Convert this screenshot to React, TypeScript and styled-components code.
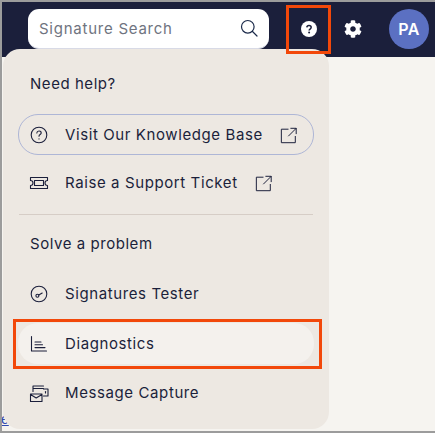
import React from "react";
import styled, { createGlobalStyle } from "styled-components";

const Global = createGlobalStyle`
  html, body { margin: 0; padding: 0; width: 435px; height: 433px; overflow: hidden; background: #f6f4f0; }
  body { font-family: Inter, "Noto Sans", sans-serif; color: #1b1f3b; }
`;

const Frame = styled.div`
  position: relative;
  box-sizing: border-box;
  width: 435px;
  height: 433px;
  overflow: hidden;
  background: #f6f4f0;
  border-top: 2px solid #9c9c9c;
  border-left: 2px solid #9c9c9c;
  border-bottom: 2px solid #9c9c9c;
`;

const Header = styled.header`
  box-sizing: border-box;
  height: 55px;
  background: #1b1f3b;
  display: flex;
  align-items: flex-start;
  padding: 7px 0 0 26px;
`;

const SearchBox = styled.div`
  box-sizing: border-box;
  flex: none;
  width: 241px;
  height: 40px;
  background: #fff;
  border-radius: 11px;
  border-bottom: 1px solid #d8dae6;
  display: flex;
  align-items: center;
  justify-content: space-between;
  padding: 0 11px 1px 11px;
  font-size: 15px;
  letter-spacing: 0.75px;
  color: #6f7480;
`;

const HeaderIcon = styled.div<{ $ml: number }>`
  flex: none;
  width: 18px;
  height: 18px;
  margin: 11px 0 0 ${(p) => p.$ml}px;
  color: #fff;
  display: flex;
`;

const Avatar = styled.div`
  flex: none;
  width: 40px;
  height: 40px;
  margin-left: 27px;
  border-radius: 50%;
  background: #5b70c2;
  color: #fff;
  font-size: 16px;
  font-weight: 600;
  letter-spacing: 0.3px;
  display: flex;
  align-items: center;
  justify-content: center;
`;

const PageLink = styled.a`
  position: absolute;
  left: -1px;
  top: 409px;
  font-family: "Liberation Sans", sans-serif;
  font-size: 14px;
  line-height: 16px;
  color: #2f49b0;
  text-decoration: underline;
`;

const Menu = styled.nav`
  position: absolute;
  left: 1px;
  top: 47px;
  box-sizing: border-box;
  width: 326px;
  height: 380px;
  background: #ede8e2;
  border-radius: 17px;
  padding: 23px 15px 0 15px;
`;

const SectionTitle = styled.div<{ $mb: number }>`
  font-size: 15px;
  line-height: 24px;
  letter-spacing: 0.55px;
  padding-left: 12px;
  margin-bottom: ${(p) => p.$mb}px;
`;

const Item = styled.a<{ $outlined?: boolean; $active?: boolean; $mt?: number }>`
  box-sizing: border-box;
  display: flex;
  align-items: center;
  height: 41px;
  margin-top: ${(p) => p.$mt ?? 0}px;
  padding: 0 10px;
  border-radius: 20px;
  font-size: 15px;
  letter-spacing: 0.6px;
  color: #1b1f3b;
  border: 1px solid ${(p) => (p.$outlined ? "#aeb6d6" : "transparent")};
  background: ${(p) => (p.$active ? "#f4f1ed" : "transparent")};
`;

const ItemIcon = styled.span`
  width: 20px;
  height: 20px;
  margin-right: 16px;
  display: flex;
  flex: none;
`;

const ExternalIcon = styled.span`
  width: 18px;
  height: 18px;
  margin-left: 17px;
  display: flex;
`;

const Divider = styled.div`
  height: 1px;
  background: #d6cdc6;
  margin: 11px 1px 17px 1px;
`;

const Highlight = styled.div<{ $l: number; $t: number; $w: number; $h: number }>`
  position: absolute;
  left: ${(p) => p.$l}px;
  top: ${(p) => p.$t}px;
  width: ${(p) => p.$w}px;
  height: ${(p) => p.$h}px;
  box-sizing: border-box;
  border: 3.5px solid #f2480a;
  pointer-events: none;
`;

const Stroke = ({ children, size = 20 }: { children: React.ReactNode; size?: number }) => (
  <svg width={size} height={size} viewBox="0 0 20 20" fill="none" stroke="currentColor" strokeWidth="1.1" strokeLinecap="round" strokeLinejoin="round">
    {children}
  </svg>
);

const External = () => (
  <Stroke size={19}>
    <path d="M9 3H1.5v15H17v-7" />
    <path d="M9.5 10.5 18 2M12 2h6v6" />
  </Stroke>
);

export default function App() {
  return (
    <Frame>
      <Global />
      <Header>
        <SearchBox>
          <span>Signature Search</span>
          <svg width="18" height="18" viewBox="0 0 18 18" fill="none" stroke="#1b2a4a" strokeWidth="1.2" strokeLinecap="round">
            <circle cx="7.8" cy="7.8" r="6.3" />
            <path d="m12.5 12.5 4.5 4.5" />
          </svg>
        </SearchBox>
        <HeaderIcon $ml={31}>
          <svg width="18" height="18" viewBox="0 0 18 18">
            <circle cx="9" cy="9" r="8" fill="#fff" />
            <path d="M6.8 7.4C6.9 6.1 7.8 5.4 9 5.4c1.3 0 2.2.8 2.2 1.9 0 1.8-2.1 1.7-2.1 3.2" fill="none" stroke="#1b1f3b" strokeWidth="1.5" />
            <circle cx="9.1" cy="12.6" r="1" fill="#1b1f3b" />
          </svg>
        </HeaderIcon>
        <HeaderIcon $ml={26}>
          <svg width="18" height="18" viewBox="0 0 512 512" fill="currentColor">
            <path d="M487.4 315.7l-42.6-24.6c4.3-23.2 4.3-47 0-70.2l42.6-24.6c4.9-2.8 7.1-8.6 5.5-14-11.1-35.6-30-67.8-54.7-94.6-3.8-4.1-10-5.1-14.8-2.3L380.8 110c-17.9-15.4-38.5-27.3-60.8-35.1V25.8c0-5.6-3.9-10.5-9.4-11.7-36.7-8.2-74.3-7.8-109.2 0-5.5 1.2-9.4 6.1-9.4 11.7V75c-22.2 7.9-42.8 19.8-60.8 35.1L88.7 85.5c-4.9-2.8-11-1.9-14.8 2.3-24.7 26.7-43.6 58.9-54.7 94.6-1.7 5.4.6 11.2 5.5 14L67.3 221c-4.3 23.2-4.3 47 0 70.2l-42.6 24.6c-4.9 2.8-7.1 8.6-5.5 14 11.1 35.6 30 67.8 54.7 94.6 3.8 4.1 10 5.1 14.8 2.3l42.6-24.6c17.9 15.4 38.5 27.3 60.8 35.1v49.2c0 5.6 3.9 10.5 9.4 11.7 36.7 8.2 74.3 7.8 109.2 0 5.5-1.2 9.4-6.1 9.4-11.7v-49.2c22.2-7.9 42.8-19.8 60.8-35.1l42.6 24.6c4.9 2.8 11 1.9 14.8-2.3 24.7-26.7 43.6-58.9 54.7-94.6 1.5-5.5-.7-11.3-5.6-14.1zM256 336c-44.1 0-80-35.9-80-80s35.9-80 80-80 80 35.9 80 80-35.9 80-80 80z" />
          </svg>
        </HeaderIcon>
        <Avatar>PA</Avatar>
      </Header>
      <PageLink>e</PageLink>
      <Menu>
        <SectionTitle $mb={18}>Need help?</SectionTitle>
        <Item $outlined>
          <ItemIcon>
            <Stroke>
              <circle cx="10" cy="10" r="7.8" />
              <path d="M7.8 8c.1-1.3 1-2 2.2-2 1.3 0 2.2.8 2.2 1.9 0 1.7-2.2 1.6-2.2 3.3" />
              <path d="M10 13.8v.1" />
            </Stroke>
          </ItemIcon>
          Visit Our Knowledge Base
          <ExternalIcon><External /></ExternalIcon>
        </Item>
        <Item $mt={7}>
          <ItemIcon>
            <Stroke>
              <path d="M1.5 4.5h17v3a2.5 2.5 0 0 0 0 5v3h-17v-3a2.5 2.5 0 0 0 0-5z" />
              <path d="M5.5 7.5h9v5h-9z" />
            </Stroke>
          </ItemIcon>
          Raise a Support Ticket
          <ExternalIcon><External /></ExternalIcon>
        </Item>
        <Divider />
        <SectionTitle $mb={17}>Solve a problem</SectionTitle>
        <Item>
          <ItemIcon>
            <Stroke>
              <circle cx="10" cy="10" r="7.8" />
              <circle cx="8.4" cy="11.8" r="1.5" />
              <path d="m9.8 11 3.4-2" />
            </Stroke>
          </ItemIcon>
          Signatures Tester
        </Item>
        <Item $active $mt={9}>
          <ItemIcon>
            <Stroke>
              <path d="M2.5 2.5v14.5h15" />
              <path d="M6 8h6M6 10.8h7.5M6 13.6h10" />
            </Stroke>
          </ItemIcon>
          Diagnostics
        </Item>
        <Item $mt={8}>
          <ItemIcon>
            <Stroke>
              <path d="M1.5 11h11.5v7.5H1.5zM1.5 11.5 7.2 15l5.8-3.5" />
              <path d="M4 8.5V3h10.5M14.5 6h4.5v7H14.5M4 5.5h10.5" />
              <path d="M16.5 8.5v1.5" />
            </Stroke>
          </ItemIcon>
          Message Capture
        </Item>
      </Menu>
      <Highlight $l={284} $t={3} $w={45} $h={49} />
      <Highlight $l={11} $t={317} $w={309} $h={50} />
    </Frame>
  );
}
